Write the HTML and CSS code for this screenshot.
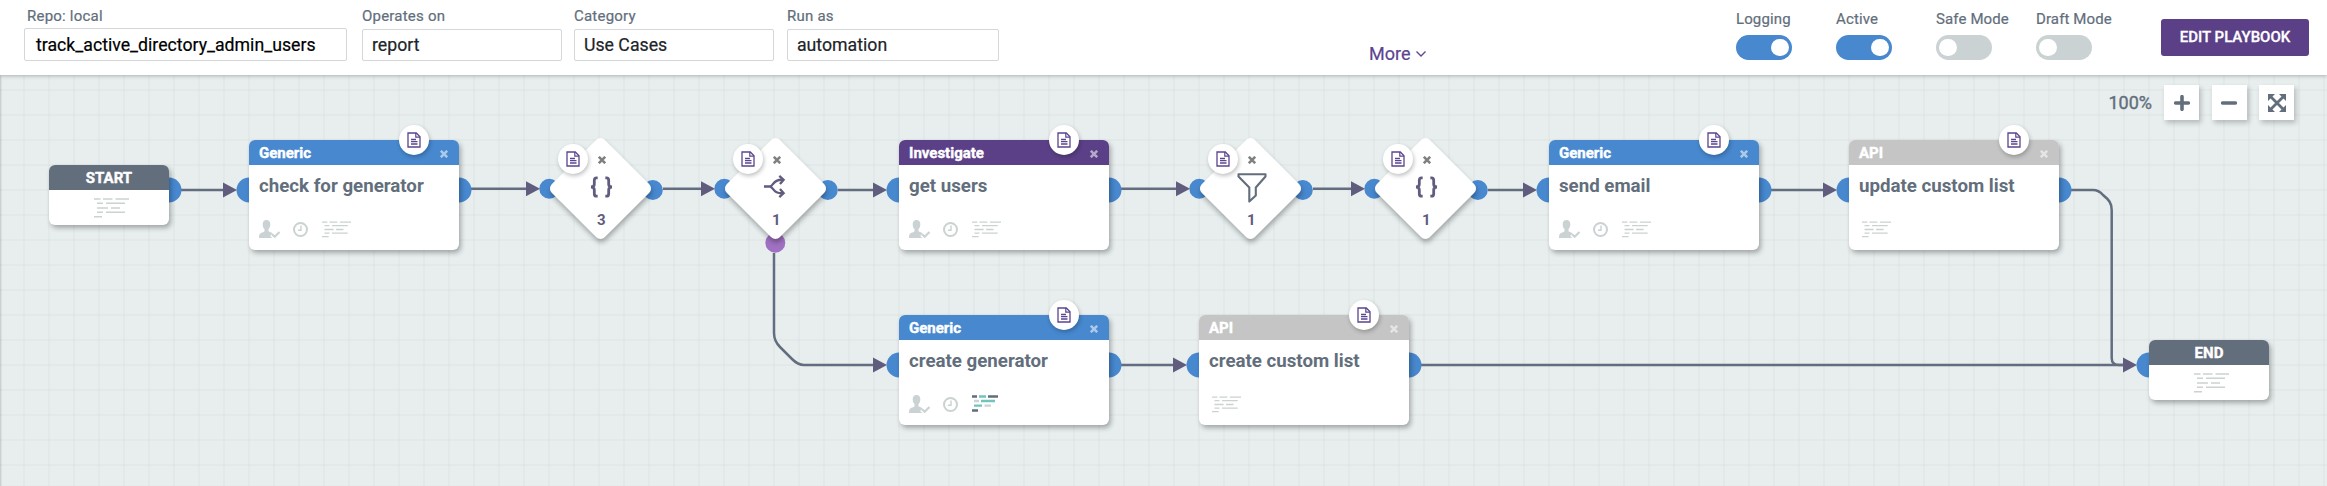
FILE: index.html
```html
<!DOCTYPE html>
<html lang="en">
<head>
<meta charset="utf-8">
<title>Playbook editor</title>
<link rel="stylesheet" href="styles.css">
</head>
<body>
<svg class="defs" width="0" height="0" aria-hidden="true">
  <symbol id="doc" viewBox="0 0 14 16"><path d="M1 1H9.3L13 4.700V15H1Z" fill="#fff" stroke="#5b4490" stroke-width="1.3"/><path d="M8.800 1V5.200H13" fill="none" stroke="#5b4490" stroke-width="1.200"/><path d="M4 7.500H9M4 9.700H10.500M4 12H10.500" stroke="#5b4490" stroke-width="1.300" fill="none"/></symbol>
  <symbol id="x" viewBox="0 0 8 8"><path d="M.8.800L7.200 7.200M7.200.800L.8 7.200" stroke="currentColor" stroke-width="2.600" fill="none"/></symbol>
  <symbol id="user" viewBox="0 0 21 18"><path d="M7.500 0C10 0 11.300 1.800 11.300 4.200C11.300 6.500 10.600 8 9.500 9V11.300C10.500 12.300 12.600 12.300 13.600 13.300L14.500 18H0C0 15.500.4 13.800 2 13C3.700 12.300 5 12.300 5.500 11.300V9C4.300 8 3.700 6.500 3.700 4.200C3.700 1.800 5 0 7.500 0Z" fill="#cad2d3"/><path d="M12.700 14.300L15.700 17.200L21 11.800" stroke="#fff" stroke-width="4.500" fill="none"/><path d="M13 14.200L15.700 16.700L20.500 12" stroke="#cad2d3" stroke-width="2.200" fill="none"/></symbol>
  <symbol id="clock" viewBox="0 0 15 15"><circle cx="7.500" cy="7.500" r="6.500" fill="none" stroke="#cad2d3" stroke-width="2"/><path d="M8 3.500V8.200H5" fill="none" stroke="#cad2d3" stroke-width="1.400"/></symbol>
  <symbol id="code" viewBox="0 0 35 20"><path d="M0 1H6.500M9 1H18.500M21.500 1H35M3 5.300H9M12 5.300H31M3 10H14M17 10H26M3 14.300H9M12 14.300H31M0 18.700H8" stroke="#cad2d3" stroke-width="1.600" fill="none"/></symbol>
  <symbol id="codeon" viewBox="0 0 27 18"><g fill="none" stroke-width="2.300"><path d="M0 1.500H5M16 1.500H26M0 15.500H6" stroke="#626e7c"/><path d="M7 1.500H14M9 6H23M2 10.700H10" stroke="#71c5bd"/><path d="M2 6H7M12.500 10.700H19" stroke="#cad2d3"/></g></symbol>
  <symbol id="braces" viewBox="0 0 24 22"><path d="M8 1.400H6.800Q4.500 1.400 4.500 4V8Q4.500 11 1 11Q4.500 11 4.500 14V18Q4.500 20.600 6.800 20.600H8M16 1.400H17.200Q19.500 1.400 19.500 4V8Q19.500 11 23 11Q19.500 11 19.500 14V18Q19.500 20.600 17.200 20.600H16" fill="none" stroke="#5f5c7e" stroke-width="2.900"/></symbol>
  <symbol id="split" viewBox="0 0 24 24"><path d="M1 12H7C11 12 10 4.500 20 5M7 12C11 12 10 19.500 20 19" fill="none" stroke="#5f5c7e" stroke-width="2.400"/><path d="M17 1L21.500 5L17.700 9.500M17.700 14.500L21.500 19L17 23" fill="none" stroke="#5f5c7e" stroke-width="2.400"/></symbol>
  <symbol id="funnel" viewBox="0 0 30 30"><path d="M1.500 1.200H28.500V3.500L18.800 14.500V22.500L12.300 28.500V14.500L1.500 3.500Z" fill="#fff" stroke="#626e7c" stroke-width="2.100" stroke-linejoin="round"/></symbol>
</svg>

<header class="topbar">
  <div class="field name"><label>Repo: local</label><div class="input">track_active_directory_admin_users</div></div>
  <div class="field operates"><label>Operates on</label><div class="input">report</div></div>
  <div class="field category"><label>Category</label><div class="input">Use Cases</div></div>
  <div class="field runas"><label>Run as</label><div class="input">automation</div></div>
  <div class="more">More <svg width="10" height="6" viewBox="0 0 10 6"><path d="M.5.500L5 5L9.500.500" fill="none" stroke="#5b4490" stroke-width="1.300"/></svg></div>
  <div class="toggles">
    <div class="toggle on"><span>Logging</span><i></i></div>
    <div class="toggle on"><span>Active</span><i></i></div>
    <div class="toggle"><span>Safe Mode</span><i></i></div>
    <div class="toggle"><span>Draft Mode</span><i></i></div>
  </div>
  <button class="edit">EDIT PLAYBOOK</button>
</header>

<main class="canvas">
  <svg class="wires" width="2327" height="411" viewBox="0 75 2327 411">
    <g fill="none" stroke="#626e7f" stroke-width="2.500">
      <path d="M181 190H225M471 188.800H528M663 188.800H703M838 190H875M1121 188.800H1178M1313 188.800H1353M1488 190H1525M1771 190H1825M1121 365H1175M1421 365H2125"/>
      <path d="M774 253V333C774 339 776 343 780 347L792 359Q798 365 804 365H875"/>
      <path d="M2071 190H2093C2097 190 2100 191.500 2103 195C2109 200 2111.700 203 2111.700 210V358Q2111.700 365 2119 365H2125"/>
    </g>
    <g fill="#5f5c7e">
      <path d="M223 182.500L237 190L223 197.500ZM526 181.300L540 188.800L526 196.300ZM701 181.300L715 188.800L701 196.300ZM873 182.500L887 190L873 197.500ZM1176 181.300L1190 188.800L1176 196.300ZM1351 181.300L1365 188.800L1351 196.300ZM1523 182.500L1537 190L1523 197.500ZM1823 182.500L1837 190L1823 197.500ZM873 357.500L887 365L873 372.500ZM1173 357.500L1187 365L1173 372.500ZM2123 357.500L2137 365L2123 372.500Z"/>
    </g>
    <g fill="#4788cf">
      <circle cx="169" cy="190" r="12.500"/><circle cx="249" cy="190" r="12.500"/><circle cx="459" cy="190" r="12.500"/>
      <circle cx="549.300" cy="188.800" r="10"/><circle cx="652.800" cy="190" r="10"/><circle cx="724.300" cy="188.800" r="10"/><circle cx="827.800" cy="190" r="10"/>
      <circle cx="899" cy="190" r="12.500"/><circle cx="1109" cy="190" r="12.500"/>
      <circle cx="1199.300" cy="188.800" r="10"/><circle cx="1302.800" cy="190" r="10"/><circle cx="1374.300" cy="188.800" r="10"/><circle cx="1477.800" cy="190" r="10"/>
      <circle cx="1549" cy="190" r="12.500"/><circle cx="1759" cy="190" r="12.500"/><circle cx="1849" cy="190" r="12.500"/><circle cx="2059" cy="190" r="12.500"/>
      <circle cx="899" cy="365" r="12.500"/><circle cx="1109" cy="365" r="12.500"/><circle cx="1199" cy="365" r="12.500"/><circle cx="1409" cy="365" r="12.500"/><circle cx="2149" cy="365" r="12.500"/>
    </g>
    <circle cx="775.300" cy="242.800" r="10" fill="#a071c2"/>
  </svg>

  <div class="zoom">
    <span>100%</span>
    <b><svg width="16" height="16" viewBox="0 0 16 16"><path d="M8 1.700V14.300M1.700 8H14.300" stroke="#626e7c" stroke-width="3.600" stroke-linecap="round"/></svg></b>
    <b><svg width="16" height="16" viewBox="0 0 16 16"><path d="M1.700 8H14.300" stroke="#626e7c" stroke-width="3.600" stroke-linecap="round"/></svg></b>
    <b><svg width="18" height="18" viewBox="0 0 18 18"><path d="M3 3L15 15M15 3L3 15" stroke="#626e7c" stroke-width="2.800"/><path d="M0 0H7L0 7ZM18 0V7L11 0ZM0 18V11L7 18ZM18 18H11L18 11Z" fill="#626e7c"/></svg></b>
  </div>

  <section class="node end n-start"><h3>START</h3><svg class="code"><use href="#code"/></svg></section>

  <section class="node n-check blue"><h3>Generic</h3><div class="badge"><svg><use href="#doc"/></svg></div><svg class="x"><use href="#x"/></svg>
    <h4>check for generator</h4><div class="icons"><svg class="user"><use href="#user"/></svg><svg class="clock"><use href="#clock"/></svg><svg class="code"><use href="#code"/></svg></div></section>

  <section class="diamond d1"><div class="shape"></div><div class="badge"><svg><use href="#doc"/></svg></div><svg class="x"><use href="#x"/></svg><svg class="glyph braces"><use href="#braces"/></svg><span>3</span></section>
  <section class="diamond d2"><div class="shape"></div><div class="badge"><svg><use href="#doc"/></svg></div><svg class="x"><use href="#x"/></svg><svg class="glyph split"><use href="#split"/></svg><span>1</span></section>

  <section class="node n-users purple"><h3>Investigate</h3><div class="badge"><svg><use href="#doc"/></svg></div><svg class="x"><use href="#x"/></svg>
    <h4>get users</h4><div class="icons"><svg class="user"><use href="#user"/></svg><svg class="clock"><use href="#clock"/></svg><svg class="code"><use href="#code"/></svg></div></section>

  <section class="diamond d3"><div class="shape"></div><div class="badge"><svg><use href="#doc"/></svg></div><svg class="x"><use href="#x"/></svg><svg class="glyph funnel"><use href="#funnel"/></svg><span>1</span></section>
  <section class="diamond d4"><div class="shape"></div><div class="badge"><svg><use href="#doc"/></svg></div><svg class="x"><use href="#x"/></svg><svg class="glyph braces"><use href="#braces"/></svg><span>1</span></section>

  <section class="node n-email blue"><h3>Generic</h3><div class="badge"><svg><use href="#doc"/></svg></div><svg class="x"><use href="#x"/></svg>
    <h4>send email</h4><div class="icons"><svg class="user"><use href="#user"/></svg><svg class="clock"><use href="#clock"/></svg><svg class="code"><use href="#code"/></svg></div></section>

  <section class="node n-update gray"><h3>API</h3><div class="badge"><svg><use href="#doc"/></svg></div><svg class="x"><use href="#x"/></svg>
    <h4>update custom list</h4><div class="icons solo"><svg class="code"><use href="#code"/></svg></div></section>

  <section class="node n-generator blue"><h3>Generic</h3><div class="badge"><svg><use href="#doc"/></svg></div><svg class="x"><use href="#x"/></svg>
    <h4>create generator</h4><div class="icons"><svg class="user"><use href="#user"/></svg><svg class="clock"><use href="#clock"/></svg><svg class="codeon"><use href="#codeon"/></svg></div></section>

  <section class="node n-list gray"><h3>API</h3><div class="badge"><svg><use href="#doc"/></svg></div><svg class="x"><use href="#x"/></svg>
    <h4>create custom list</h4><div class="icons solo"><svg class="code"><use href="#code"/></svg></div></section>

  <section class="node end n-end"><h3>END</h3><svg class="code"><use href="#code"/></svg></section>
</main>
</body>
</html>
```

FILE: styles.css
```css
* { box-sizing: border-box; }
body { margin: 0; width: 2327px; height: 486px; overflow: hidden; font-family: Roboto, "Liberation Sans", sans-serif; color: #626e7c; background: #e8eeee; }
.defs { display: block; }
h3, h4 { margin: 0; }

.topbar { height: 75px; display: flex; background: #fff; position: relative; z-index: 2; box-shadow: 0 1px 4px rgba(0, 0, 0, .25); padding-left: 24px; }
.field { padding-top: 6px; }
.field label { display: block; height: 20px; line-height: 20px; font-size: 15px; padding-left: 3px; letter-spacing: .22px; -webkit-text-stroke: .2px; }
.input { height: 32px; margin-top: 3px; border: 1px solid #d4d6d8; border-radius: 2px; font-size: 17.700px; line-height: 31px; padding-left: 9px; color: #202428; white-space: nowrap; -webkit-text-stroke: .2px; }
.name { width: 323px; margin-right: 15px; }
.name .input { height: 33px; margin-top: 2px; padding-left: 11px; line-height: 33px; color: #000; }
.operates { width: 200px; margin-right: 12px; }
.category { width: 200px; margin-right: 13px; }
.runas { width: 212px; }
.operates label, .category label, .runas label { padding-left: 0; }
.more { margin-left: 370px; padding-top: 43px; font-size: 18px; line-height: 22px; color: #5b4490; width: 367px; -webkit-text-stroke: .2px; }
.more svg { margin-left: 1px; vertical-align: 3px; }
.toggles { display: flex; width: 425px; padding-top: 9px; }
.toggle { width: 100px; font-size: 15px; white-space: nowrap; }
.toggle span { display: block; height: 20px; line-height: 20px; letter-spacing: .12px; -webkit-text-stroke: .2px; }
.toggle i { display: flex; width: 56px; height: 25px; margin-top: 6px; border-radius: 13px; background: #cad2d3; padding: 4px 3px; }
.toggle i::after { content: ""; width: 18px; height: 17px; border-radius: 9px; background: #fff; }
.toggle.on i { background: #4788cf; justify-content: flex-end; }
.edit { width: 148px; height: 37px; margin-top: 19px; border: 0; border-radius: 3px; padding: 0; background: #5b4088; color: #fff; font: 500 15px/37px Roboto, sans-serif; -webkit-text-stroke: .3px; }

.canvas { height: 411px; position: relative; background-color: #e8eeee; background-image: linear-gradient(90deg, rgba(0, 0, 0, .02) 2px, transparent 2px), linear-gradient(rgba(0, 0, 0, .02) 2px, transparent 2px); background-size: 25px 25px; background-position: -2px 0, 0 14px; box-shadow: inset 2px 0 2px -1px rgba(0, 0, 0, .18); }
.wires { position: absolute; left: 0; top: 0; }
.zoom { display: flex; justify-content: flex-end; padding: 10px 33px 0 0; }
.zoom span { font-size: 18px; line-height: 36px; margin-right: 12px; -webkit-text-stroke: .4px; }
.zoom b { width: 35px; height: 35px; margin-left: 12.500px; background: #fff; box-shadow: 2px 3px 5px rgba(0, 0, 0, .22); display: flex; align-items: center; justify-content: center; }
.zoom span + b { margin-left: 0; }

.node { position: absolute; width: 210px; height: 110px; border-radius: 6px; background: #fff; box-shadow: 2px 3px 5px rgba(0, 0, 0, .3); }
.node h3 { height: 25px; padding-left: 10px; border-radius: 6px 6px 0 0; font-size: 15px; line-height: 26px; font-weight: 700; color: #fff; -webkit-text-stroke: .4px; }
.node h4 { padding: 8px 0 0 10px; font-size: 18.700px; line-height: 26px; font-weight: 700; }
.blue h3 { background: #4788cf; }
.purple h3 { background: #5b4088; }
.gray h3 { background: #c5c5c5; }
.end { width: 120px; height: 60px; text-align: center; }
.end h3 { background: #626e7c; padding: 0; }
.code { width: 29px; height: 17px; }
.end .code { width: 35px; height: 20px; display: block; margin: 8px 0 0 45px; }
.badge { position: absolute; right: 30px; top: -15px; width: 30px; height: 30px; border-radius: 50%; background: #fff; box-shadow: 1px 2px 4px rgba(0, 0, 0, .25); display: flex; align-items: center; justify-content: center; }
.badge svg { width: 14px; height: 16px; }
.x { position: absolute; width: 8px; height: 8px; right: 11px; top: 10px; color: rgba(255, 255, 255, .55); }
.icons { display: flex; padding: 21px 0 0 10px; }
.user { width: 21px; height: 18px; }
.clock { width: 15px; height: 15px; margin: 2px 14px 0 13px; }
.icons .code { margin-top: 1px; }
.codeon { width: 27px; height: 18px; }
.solo { padding-left: 13px; }

.n-start { left: 49px; top: 90px; }
.n-check { left: 249px; top: 65px; }
.n-users { left: 899px; top: 65px; }
.n-email { left: 1549px; top: 65px; }
.n-update { left: 1849px; top: 65px; }
.n-generator { left: 899px; top: 240px; }
.n-list { left: 1199px; top: 240px; }
.n-end { left: 2149px; top: 265px; }

.diamond { position: absolute; top: 63px; width: 102px; height: 102px; display: flex; flex-direction: column; align-items: center; }
.shape { position: absolute; left: 13.300px; top: 13.300px; width: 75px; height: 75px; border-radius: 6px; background: #fff; transform: rotate(45deg); box-shadow: 3px 2px 5px rgba(0, 0, 0, .3); }
.diamond .badge { left: 7.500px; top: 6px; right: auto; }
.diamond .x { position: relative; right: auto; top: auto; left: .5px; margin-top: 18px; color: #808080; }
.glyph { position: relative; }
.braces { width: 23px; height: 22px; margin: 12px 0 13px; }
.split { width: 23px; height: 23px; margin: 11px 3px 13px 0; }
.funnel { width: 30px; height: 30px; margin: 9px 0 8px 2px; }
.diamond span { position: relative; left: .3px; font-size: 15px; line-height: 18px; font-weight: 700; color: #5f5c7e; }
.d1 { left: 550px; }
.d2 { left: 725px; }
.d3 { left: 1200px; }
.d4 { left: 1375px; }
```
